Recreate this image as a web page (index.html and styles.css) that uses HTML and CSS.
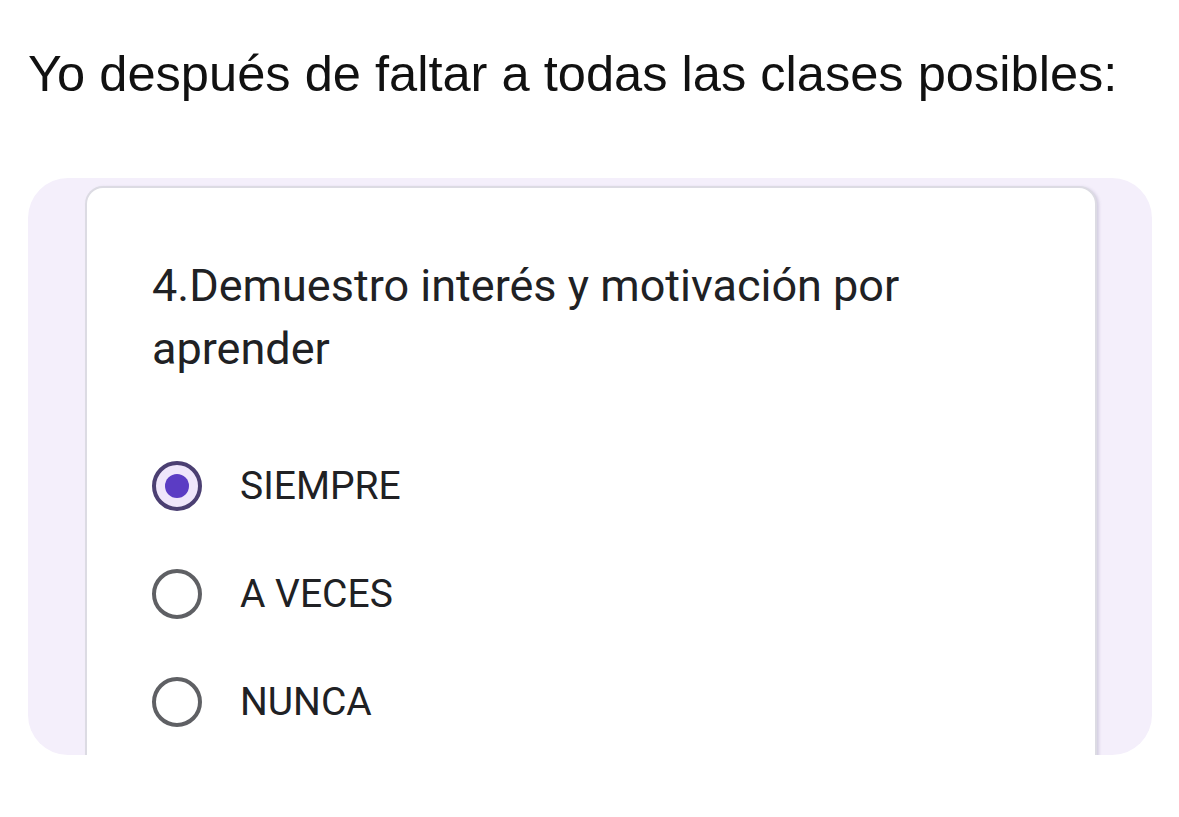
FILE: index.html
```html
<!DOCTYPE html>
<html lang="es">
<head>
<meta charset="utf-8">
<link rel="stylesheet" href="styles.css">
</head>
<body>
<h1 class="title">Yo después de faltar a todas las clases posibles:</h1>
<div class="panel">
  <div class="card">
    <p class="question">4.Demuestro interés y motivación por aprender</p>
    <ul class="options">
      <li class="option">
        <span class="radio checked"><span class="dot"></span></span>
        <span class="label">SIEMPRE</span>
      </li>
      <li class="option">
        <span class="radio"></span>
        <span class="label">A VECES</span>
      </li>
      <li class="option">
        <span class="radio"></span>
        <span class="label">NUNCA</span>
      </li>
    </ul>
  </div>
</div>
</body>
</html>
```

FILE: styles.css
```css
html, body {
  margin: 0;
  padding: 0;
  background: #ffffff;
}

body {
  width: 1179px;
  height: 817px;
  overflow: hidden;
}

.title {
  margin: 0;
  padding: 44px 0 0 28px;
  height: 178px;
  box-sizing: border-box;
  font-family: "Liberation Sans", Arial, sans-serif;
  font-weight: 400;
  font-size: 50.6px;
  line-height: 60px;
  color: #111111;
  white-space: nowrap;
}

.panel {
  margin: 0 27px 0 28px;
  height: 577px;
  box-sizing: border-box;
  padding: 8px 55px 0 57px;
  background: #f4effb;
  border-radius: 40px;
  overflow: hidden;
}

.card {
  height: 600px;
  background: #ffffff;
  border: 2px solid #dcdbe3;
  border-bottom: none;
  border-radius: 18px 18px 0 0;
  box-shadow: 2px 1px 3px rgba(120, 110, 150, 0.25);
  padding: 66px 0 0 65px;
  box-sizing: border-box;
}

.question {
  margin: 0;
  width: 800px;
  font-family: Roboto, "Liberation Sans", sans-serif;
  font-size: 45px;
  line-height: 63px;
  color: #202124;
}

.options {
  list-style: none;
  margin: 81px 0 0 0;
  padding: 0;
  display: flex;
  flex-direction: column;
  gap: 58px;
}

.option {
  display: flex;
  align-items: center;
  gap: 38px;
  height: 50px;
}

.radio {
  width: 50px;
  height: 50px;
  box-sizing: border-box;
  border: 4px solid #5f6064;
  border-radius: 50%;
  display: flex;
  align-items: center;
  justify-content: center;
  flex: none;
}

.radio.checked {
  border-color: #4b3f72;
  background: #efe6fb;
}

.dot {
  width: 24px;
  height: 24px;
  border-radius: 50%;
  background: #5b3cc4;
}

.label {
  font-family: Roboto, "Liberation Sans", sans-serif;
  font-size: 39px;
  color: #202124;
}
```
